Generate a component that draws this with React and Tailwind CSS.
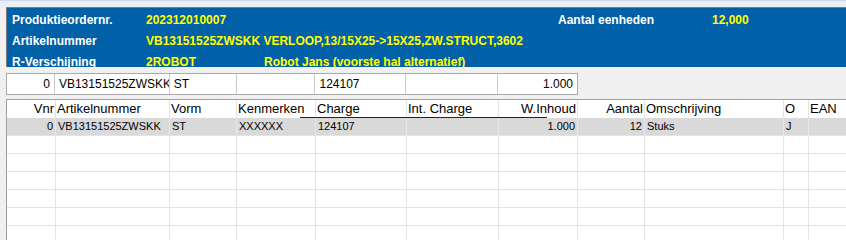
import React from 'react';

const cols = [
  { label: 'Vnr', w: 49, right: true },
  { label: 'Artikelnummer', w: 114 },
  { label: 'Vorm', w: 67 },
  { label: 'Kenmerken', w: 79 },
  { label: 'Charge', w: 91 },
  { label: 'Int. Charge', w: 92 },
  { label: 'W.Inhoud', w: 79, right: true },
  { label: 'Aantal', w: 67, right: true },
  { label: 'Omschrijving', w: 139 },
  { label: 'O', w: 25 },
  { label: 'EAN', w: 60 },
];

const dataRow = ['0', 'VB13151525ZWSKK', 'ST', 'XXXXXX', '124107', '', '1.000', '12', 'Stuks', 'J', ''];

// invoerregel boven de tabel
const inputCells = [
  { v: '0', w: 48, right: true },
  { v: 'VB13151525ZWSKK', w: 115 },
  { v: 'ST', w: 67 },
  { v: '', w: 79 },
  { v: '124107', w: 91 },
  { v: '', w: 92 },
  { v: '1.000', w: 79, right: true },
];

const font = { fontFamily: '"Liberation Sans", Arial, sans-serif' };

const App = () => {
  return (
    <div className="w-[846px] h-[240px] bg-[#f0f0f0] overflow-hidden" style={font}>
      <div className="h-[7px] bg-[#eaeef4] border-t border-[#cdd9ec]" />

      <div className="pl-[6px]">
        <div className="h-[60px] bg-[#0060a8] border-t border-l border-[#7a7a7a] pl-[5px] pt-[1px] text-[12px] font-bold overflow-hidden">
          <div className="flex h-[21px] items-center">
            <span className="w-[134px] text-white">Produktieordernr.</span>
            <span className="w-[412px] text-[#ffff00]">202312010007</span>
            <span className="w-[154px] text-white">Aantal eenheden</span>
            <span className="text-[#ffff00]">12,000</span>
          </div>
          <div className="flex h-[21px] items-center">
            <span className="w-[134px] text-white">Artikelnummer</span>
            <span className="text-[#ffff00]">VB13151525ZWSKK VERLOOP,13/15X25-&gt;15X25,ZW.STRUCT,3602</span>
          </div>
          <div className="flex h-[21px] items-center">
            <span className="w-[134px] text-white">R-Verschijning</span>
            <span className="w-[118px] text-[#ffff00]">2ROBOT</span>
            <span className="text-[#ffff00]">Robot Jans (voorste hal alternatief)</span>
          </div>
        </div>

        <div className="mt-[6px] flex w-[572px] h-[22px] bg-white border border-[#a9a9a9] text-[12px] text-black">
          {inputCells.map((c, i) => (
            <div
              key={i}
              style={{ width: c.w }}
              className={`h-full flex items-center overflow-hidden whitespace-nowrap px-[4px] border-r border-[#c8c8c8] last:border-r-0 ${
                c.right ? 'justify-end' : ''
              }`}
            >
              {c.v}
            </div>
          ))}
        </div>

        <div className="relative mt-[4px] h-[141px] bg-white border-t border-l border-[#a0a0a0] overflow-hidden">
          <div className="flex h-[18px] text-[13px] text-black">
            {cols.map((c, i) => (
              <div
                key={i}
                style={{ width: c.w }}
                className={`shrink-0 h-full flex items-center whitespace-nowrap overflow-hidden px-[1px] border-r border-[#e3e3e3] ${
                  c.right ? 'justify-end' : ''
                }`}
              >
                {c.label}
              </div>
            ))}
          </div>
          <div className="absolute left-[293px] top-[17px] w-[247px] h-[1px] bg-[#222]" />

          <div className="flex h-[18px] bg-[#d9d9d9] text-[11px] text-black border-b border-[#e3e3e3]">
            {cols.map((c, i) => (
              <div
                key={i}
                style={{ width: c.w }}
                className={`shrink-0 h-full flex items-center whitespace-nowrap overflow-hidden px-[2px] border-r border-[#e8e8e8] ${
                  c.right ? 'justify-end' : ''
                }`}
              >
                {dataRow[i]}
              </div>
            ))}
          </div>

          {[0, 1, 2, 3, 4, 5].map((r) => (
            <div key={r} className="flex h-[18px] border-b border-[#e3e3e3]">
              {cols.map((c, i) => (
                <div key={i} style={{ width: c.w }} className="shrink-0 h-full border-r border-[#e3e3e3]" />
              ))}
            </div>
          ))}
        </div>
      </div>
    </div>
  );
};

export default App;
